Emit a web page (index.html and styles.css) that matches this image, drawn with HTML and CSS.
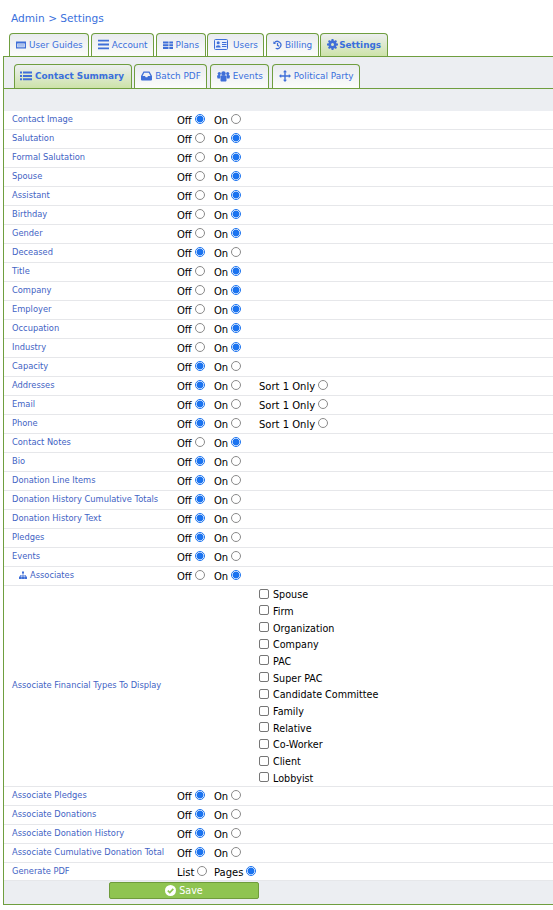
FILE: index.html
```html
<!DOCTYPE html>
<html lang="en">
<head>
<meta charset="utf-8">
<title>Settings</title>
<link rel="stylesheet" href="styles.css">
</head>
<body>
<div class="crumb">Admin &gt; Settings</div>
<nav class="tabs outer">
  <a class="tab"><svg class="ic" width="10" height="10" viewBox="0 0 10 10"><path fill="#3f6fd8" fill-rule="evenodd" d="M0 1.500h10v7H0zM1.200 3.500v3.800h7.600V3.500z"/><rect x="1.700" y="4" width="6.600" height="2.800" fill="#a9c0ee"/></svg>User Guides</a>
  <a class="tab"><svg class="ic" width="11" height="11" viewBox="0 0 11 11"><path fill="#3f6fd8" d="M0 .8h11v1.800H0zM0 4.600h11v1.800H0zM0 8.400h11v1.800H0z"/></svg>Account</a>
  <a class="tab"><svg class="ic" width="10" height="10" viewBox="0 0 10 10"><path fill="#3f6fd8" d="M0 1.500h5.500v2H0zM6.300 1.500H10v2H6.300zM0 4.200h5.500v2H0zM6.300 4.200H10v2H6.300zM0 6.900h5.500v2H0zM6.300 6.900H10v2H6.300z"/></svg>Plans</a>
  <a class="tab"><svg class="ic wide" width="14" height="11" viewBox="0 0 14 11"><rect x=".5" y=".5" width="13" height="10" rx="1" fill="#e8effc" stroke="#3f6fd8"/><circle cx="4.200" cy="3.800" r="1.500" fill="#3f6fd8"/><path fill="#3f6fd8" d="M1.800 8.500c0-3 4.800-3 4.800 0zM8 3h4.500v1H8zM8 5h4.500v1H8zM8 7h4.500v1H8z"/></svg>Users</a>
  <a class="tab"><svg class="ic" width="9" height="10" viewBox="0 0 10 10"><path fill="none" stroke="#3f6fd8" stroke-width="1.400" d="M1.500 2.700A4 4 0 1 1 3 8.600M5 2.800v2.600l1.800 1"/><path fill="#3f6fd8" d="M.4.800l3 3H.4z"/></svg>Billing</a>
  <a class="tab on"><svg class="ic" width="11" height="11" viewBox="0 0 11 11"><circle cx="5.500" cy="5.500" r="3.100" fill="none" stroke="#3f6fd8" stroke-width="2.200"/><path stroke="#3f6fd8" stroke-width="2" d="M5.500 0v11M0 5.500h11M1.600 1.600l7.800 7.800M9.400 1.600l-7.800 7.800"/><circle cx="5.500" cy="5.500" r="1.500" fill="#dbe8c8"/></svg>Settings</a>
</nav>
<main class="panel">
  <nav class="tabs inner">
    <a class="tab on"><svg class="ic" width="12" height="10" viewBox="0 0 12 10"><path fill="#3f6fd8" d="M0 .5h2v2H0zM3 .5h9v2H3zM0 3.900h2v2H0zM3 3.900h9v2H3zM0 7.300h2v2H0zM3 7.300h9v2H3z"/></svg>Contact Summary</a>
    <a class="tab"><svg class="ic" width="11" height="10" viewBox="0 0 11 10"><path fill="#3f6fd8" fill-rule="evenodd" d="M2.500.5h6L11 5v3.500a1 1 0 0 1-1 1H1a1 1 0 0 1-1-1V5zM3.200 1.700L1.500 5h2.500l.7 1.300h1.600L7 5h2.500L7.800 1.700z"/></svg>Batch PDF</a>
    <a class="tab"><svg class="ic" width="13" height="11" viewBox="0 0 13 11"><g fill="#3f6fd8"><circle cx="2.300" cy="2.600" r="1.600"/><circle cx="10.700" cy="2.600" r="1.600"/><circle cx="6.500" cy="2.500" r="2.200"/><path d="M0 5c0-.8 3-1.400 3.500-.6L3 7.500H.5zM13 5c0-.8-3-1.400-3.500-.6l.5 3.100h2.500zM3.500 6c0-1.500 1.500-1.700 3-1.700s3 .2 3 1.700v3.500c0 .6-.5 1-1 1h-4c-.5 0-1-.4-1-1z"/></g></svg>Events</a>
    <a class="tab"><svg class="ic" width="12" height="12" viewBox="0 0 12 12"><path fill="#3f6fd8" d="M6 0l2 2.200H6.700v3.100h3.100V4L12 6 9.800 8V6.700H6.700v3.100H8L6 12 4 9.800h1.300V6.700H2.200V8L0 6l2.200-2v1.300h3.100V2.200H4z"/></svg>Political Party</a>
  </nav>
  <div class="band"></div>
  <form class="rows">
    <div class="row"><label class="name">Contact Image</label><span class="opts"><span class="off">Off<input type="radio" name="r1" checked></span><span class="onn">On<input type="radio" name="r1"></span></span></div>
    <div class="row"><label class="name">Salutation</label><span class="opts"><span class="off">Off<input type="radio" name="r2"></span><span class="onn">On<input type="radio" name="r2" checked></span></span></div>
    <div class="row"><label class="name">Formal Salutation</label><span class="opts"><span class="off">Off<input type="radio" name="r3"></span><span class="onn">On<input type="radio" name="r3" checked></span></span></div>
    <div class="row"><label class="name">Spouse</label><span class="opts"><span class="off">Off<input type="radio" name="r4"></span><span class="onn">On<input type="radio" name="r4" checked></span></span></div>
    <div class="row"><label class="name">Assistant</label><span class="opts"><span class="off">Off<input type="radio" name="r5"></span><span class="onn">On<input type="radio" name="r5" checked></span></span></div>
    <div class="row"><label class="name">Birthday</label><span class="opts"><span class="off">Off<input type="radio" name="r6"></span><span class="onn">On<input type="radio" name="r6" checked></span></span></div>
    <div class="row"><label class="name">Gender</label><span class="opts"><span class="off">Off<input type="radio" name="r7"></span><span class="onn">On<input type="radio" name="r7" checked></span></span></div>
    <div class="row"><label class="name">Deceased</label><span class="opts"><span class="off">Off<input type="radio" name="r8" checked></span><span class="onn">On<input type="radio" name="r8"></span></span></div>
    <div class="row"><label class="name">Title</label><span class="opts"><span class="off">Off<input type="radio" name="r9"></span><span class="onn">On<input type="radio" name="r9" checked></span></span></div>
    <div class="row"><label class="name">Company</label><span class="opts"><span class="off">Off<input type="radio" name="r10"></span><span class="onn">On<input type="radio" name="r10" checked></span></span></div>
    <div class="row"><label class="name">Employer</label><span class="opts"><span class="off">Off<input type="radio" name="r11"></span><span class="onn">On<input type="radio" name="r11" checked></span></span></div>
    <div class="row"><label class="name">Occupation</label><span class="opts"><span class="off">Off<input type="radio" name="r12"></span><span class="onn">On<input type="radio" name="r12" checked></span></span></div>
    <div class="row"><label class="name">Industry</label><span class="opts"><span class="off">Off<input type="radio" name="r13"></span><span class="onn">On<input type="radio" name="r13" checked></span></span></div>
    <div class="row"><label class="name">Capacity</label><span class="opts"><span class="off">Off<input type="radio" name="r14" checked></span><span class="onn">On<input type="radio" name="r14"></span></span></div>
    <div class="row"><label class="name">Addresses</label><span class="opts"><span class="off">Off<input type="radio" name="r15" checked></span><span class="onn">On<input type="radio" name="r15"></span><span class="sort">Sort 1 Only<input type="radio" name="r15"></span></span></div>
    <div class="row"><label class="name">Email</label><span class="opts"><span class="off">Off<input type="radio" name="r16" checked></span><span class="onn">On<input type="radio" name="r16"></span><span class="sort">Sort 1 Only<input type="radio" name="r16"></span></span></div>
    <div class="row"><label class="name">Phone</label><span class="opts"><span class="off">Off<input type="radio" name="r17" checked></span><span class="onn">On<input type="radio" name="r17"></span><span class="sort">Sort 1 Only<input type="radio" name="r17"></span></span></div>
    <div class="row"><label class="name">Contact Notes</label><span class="opts"><span class="off">Off<input type="radio" name="r18"></span><span class="onn">On<input type="radio" name="r18" checked></span></span></div>
    <div class="row"><label class="name">Bio</label><span class="opts"><span class="off">Off<input type="radio" name="r19" checked></span><span class="onn">On<input type="radio" name="r19"></span></span></div>
    <div class="row"><label class="name">Donation Line Items</label><span class="opts"><span class="off">Off<input type="radio" name="r20" checked></span><span class="onn">On<input type="radio" name="r20"></span></span></div>
    <div class="row"><label class="name">Donation History Cumulative Totals</label><span class="opts"><span class="off">Off<input type="radio" name="r21" checked></span><span class="onn">On<input type="radio" name="r21"></span></span></div>
    <div class="row"><label class="name">Donation History Text</label><span class="opts"><span class="off">Off<input type="radio" name="r22" checked></span><span class="onn">On<input type="radio" name="r22"></span></span></div>
    <div class="row"><label class="name">Pledges</label><span class="opts"><span class="off">Off<input type="radio" name="r23" checked></span><span class="onn">On<input type="radio" name="r23"></span></span></div>
    <div class="row"><label class="name">Events</label><span class="opts"><span class="off">Off<input type="radio" name="r24" checked></span><span class="onn">On<input type="radio" name="r24"></span></span></div>
    <div class="row"><label class="name sub"><svg class="sitemap" width="8" height="8" viewBox="0 0 8 8"><path fill="#3f6fd8" d="M3 .5h2v2H3zM3.700 2.500h.6v1.500h2.500v1.500h-.6V4.600H4.300v.9h-.6v-.9H1.800v.9h-.6V4H3.700zM0 5.500h2.600V8H0zM2.800 5.500h2.400V8H2.800zM5.400 5.500H8V8H5.400z"/></svg>Associates</label><span class="opts"><span class="off">Off<input type="radio" name="r25"></span><span class="onn">On<input type="radio" name="r25" checked></span></span></div>
    <div class="row tall"><label class="name">Associate Financial Types To Display</label>
      <div class="checks">
        <label class="chk"><input type="checkbox">Spouse</label>
        <label class="chk"><input type="checkbox">Firm</label>
        <label class="chk"><input type="checkbox">Organization</label>
        <label class="chk"><input type="checkbox">Company</label>
        <label class="chk"><input type="checkbox">PAC</label>
        <label class="chk"><input type="checkbox">Super PAC</label>
        <label class="chk"><input type="checkbox">Candidate Committee</label>
        <label class="chk"><input type="checkbox">Family</label>
        <label class="chk"><input type="checkbox">Relative</label>
        <label class="chk"><input type="checkbox">Co-Worker</label>
        <label class="chk"><input type="checkbox">Client</label>
        <label class="chk"><input type="checkbox">Lobbyist</label>
      </div>
    </div>
    <div class="row"><label class="name">Associate Pledges</label><span class="opts"><span class="off">Off<input type="radio" name="r26" checked></span><span class="onn">On<input type="radio" name="r26"></span></span></div>
    <div class="row"><label class="name">Associate Donations</label><span class="opts"><span class="off">Off<input type="radio" name="r27" checked></span><span class="onn">On<input type="radio" name="r27"></span></span></div>
    <div class="row"><label class="name">Associate Donation History</label><span class="opts"><span class="off">Off<input type="radio" name="r28" checked></span><span class="onn">On<input type="radio" name="r28"></span></span></div>
    <div class="row"><label class="name">Associate Cumulative Donation Total</label><span class="opts"><span class="off">Off<input type="radio" name="r29" checked></span><span class="onn">On<input type="radio" name="r29"></span></span></div>
    <div class="row last"><label class="name">Generate PDF</label><span class="opts"><span class="list">List<input type="radio" name="r30"></span><span class="pages">Pages<input type="radio" name="r30" checked></span></span></div>
  </form>
  <div class="savebar"><button class="save" type="button"><svg class="ic" width="11" height="11" viewBox="0 0 11 11"><circle cx="5.500" cy="5.500" r="5.500" fill="#fff"/><path fill="none" stroke="#8fc451" stroke-width="1.700" d="M2.800 5.600l2 2 3.500-3.700"/></svg>Save</button></div>
</main>
</body>
</html>
```
FILE: styles.css
```css
* { box-sizing: border-box; }
html, body { margin: 0; padding: 0; background: #fff; overflow: hidden; }
body { width: 553px; height: 910px; font-family: "DejaVu Sans", Verdana, sans-serif; color: #000; }
.crumb { padding: 11px 0 0 11px; height: 33px; font-size: 10.6px; line-height: 15px; color: #3a6fdc; }
.tabs { display: flex; gap: 1.5px; }
.outer { padding-left: 9px; height: 23px; }
.inner { padding-left: 10px; gap: 2.5px; height: 24px; padding-top: 7px; box-sizing: content-box; border-bottom: 1px solid #6f9e3f; }
.tab { display: flex; align-items: center; padding: 0 5.5px 1px 6px; height: 100%; border: 1px solid #6f9e3f; border-bottom: 0; border-radius: 4px 4px 0 0; background: linear-gradient(#e9ebef, #fbfcfb); font-size: 8.9px; color: #3a6fdc; white-space: nowrap; }
.tab.on { background: linear-gradient(#eceef0, #cde3a9); font-weight: bold; }
.outer .tab.on { padding-left: 5.5px; }
.outer .tab.on .ic { margin-right: 1.5px; }
.inner .tab.on { padding-left: 5px; padding-right: 6.5px; }
.ic { margin-right: 3px; flex: none; }
.ic.wide { margin-right: 5px; }
.panel { margin-left: 3px; border-left: 1px solid #6f9e3f; border-top: 1px solid #6f9e3f; border-bottom: 1px solid #6f9e3f; height: 849px; background: #eceef2; }
.band { height: 22px; background: #eceef2; }
.rows { background: #fff; }
.row { display: flex; align-items: center; height: 19px; border-bottom: 1px solid #e6e7ea; padding-left: 8px; }
.row.tall { height: 201px; }
.row.last { height: 18px; }
.name { width: 165px; flex: none; font-size: 8.3px; color: #3f63c4; position: relative; top: -1px; white-space: nowrap; }
.name.sub { padding-left: 7px; }
.sitemap { margin-right: 3px; vertical-align: -1px; }
.opts { display: flex; font-size: 10px; line-height: 12px; position: relative; top: 1px; }
.off, .list { width: 37px; flex: none; }
.onn { width: 45px; flex: none; }
.sort, .pages { flex: none; }
.opts input { appearance: none; display: inline-block; width: 10px; height: 10px; margin: 0 0 0 3px; border: 1px solid #8a8a8a; border-radius: 50%; background: #fff; position: relative; top: -2px; vertical-align: middle; }
.opts input:checked { border: 1px solid #1a73f0; background: radial-gradient(circle, #1a73f0 0, #1a73f0 3.2px, #fff 3.7px); }
.checks { display: flex; flex-direction: column; margin-left: 82px; padding-top: 1px; }
.chk { display: flex; align-items: center; height: 16.7px; font-size: 9.6px; }
.chk input { appearance: none; width: 10px; height: 10px; margin: 0 4px 0 0; border: 1px solid #767676; border-radius: 2px; background: #fff; position: relative; top: -1px; }
.savebar { padding: 1px 0 0 105px; }
.save { display: flex; align-items: center; justify-content: center; width: 150px; height: 17px; padding: 0; border: 1px solid #6f9c3c; border-radius: 2px; background: #8fc451; color: #fff; font: 9.6px "DejaVu Sans", Verdana, sans-serif; }
```
